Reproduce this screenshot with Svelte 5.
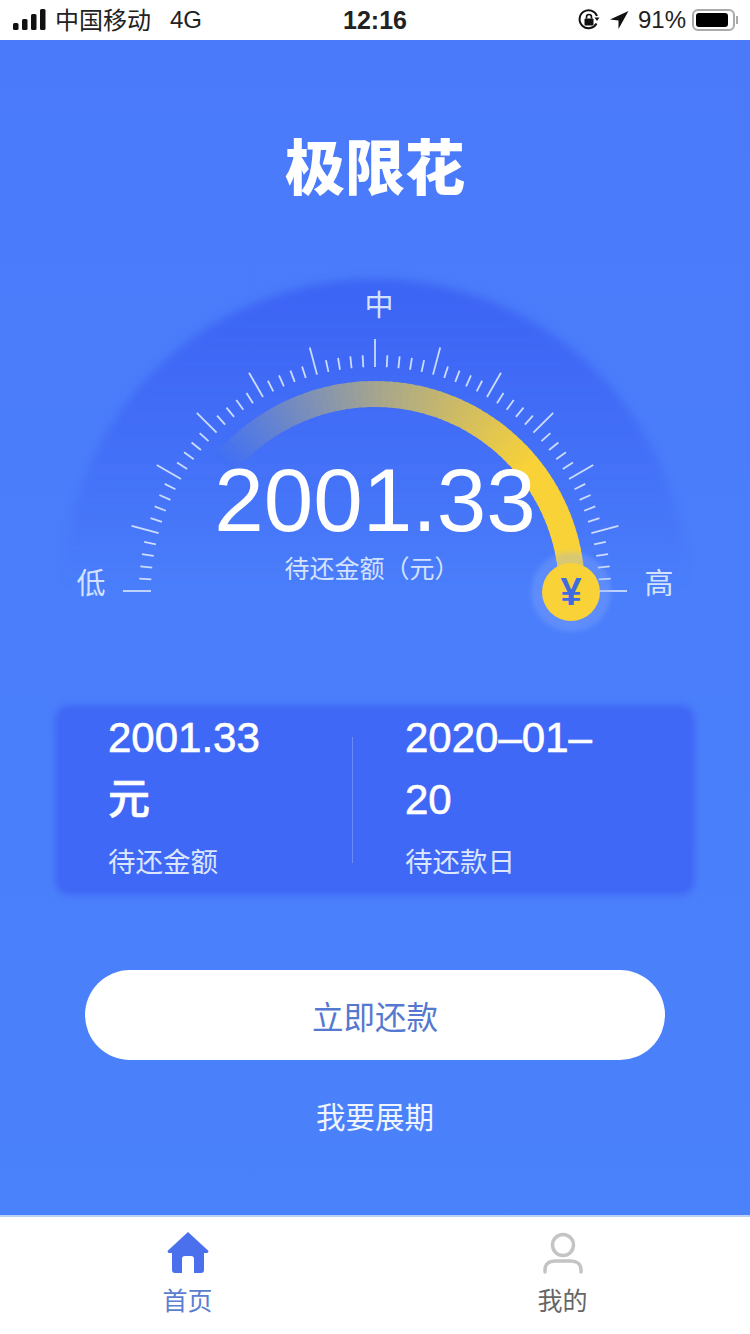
<script>
	const cx = 375;
	const cy = 331;
	const bg = [65, 112, 245];
	const yellow = [249, 210, 56];

	const ticks = [];
	for (let i = 0; i <= 60; i++) {
		const a = ((180 - i * 3) * Math.PI) / 180;
		const long = i % 5 === 0;
		const r1 = 224;
		const r2 = long ? 252 : 236;
		ticks.push({
			x1: cx + r1 * Math.cos(a),
			y1: cy - r1 * Math.sin(a),
			x2: cx + r2 * Math.cos(a),
			y2: cy - r2 * Math.sin(a)
		});
	}

	// arc fades from the background colour into yellow, so draw it in short pieces
	function strength(deg) {
		if (deg >= 90) return ((140 - deg) / 50) * 0.55;
		if (deg >= 40) return 0.55 + ((90 - deg) / 50) * 0.45;
		return 1;
	}
	const pieces = [];
	for (let d = 140; d > 0; d -= 2) {
		const a1 = (d * Math.PI) / 180;
		const a2 = ((d - 2.6) * Math.PI) / 180;
		const s = strength(d);
		const c = bg.map((v, i) => Math.round(v + (yellow[i] - v) * s));
		pieces.push({
			d: `M${cx + 197 * Math.cos(a1)} ${cy - 197 * Math.sin(a1)}A197 197 0 0 1 ${cx + 197 * Math.cos(a2)} ${cy - 197 * Math.sin(a2)}`,
			color: `rgb(${c.join(',')})`
		});
	}
</script>

<div class="page">
	<header class="status">
		<div class="status-left">
			<svg width="34" height="24" viewBox="0 0 34 24">
				<rect x="0" y="14" width="5.5" height="7" rx="1.5" />
				<rect x="9" y="10" width="5.5" height="11" rx="1.5" />
				<rect x="18" y="5" width="5.5" height="16" rx="1.5" />
				<rect x="27" y="0" width="5.5" height="21" rx="1.5" />
			</svg>
			<span class="carrier">中国移动</span>
			<span class="net">4G</span>
		</div>
		<div class="clock">12:16</div>
		<div class="status-right">
			<svg width="24" height="24" viewBox="0 0 24 24">
				<path d="M19.5 15.5A9 9 0 1 1 20 8" fill="none" stroke="#111" stroke-width="2" />
				<path d="M17.5 9.5h5l-2.5 3.4z" fill="#111" />
				<rect x="7.5" y="10.5" width="9" height="7" rx="1" fill="#111" />
				<path d="M9.5 10.5V9a2.500 2.500 0 0 1 5 0v1.500" fill="none" stroke="#111" stroke-width="1.600" />
			</svg>
			<svg class="arrow" width="20" height="20" viewBox="0 0 20 20">
				<path d="M19.500 1 1 9.500l8.500 1V19z" fill="#111" />
			</svg>
			<span class="pct">91%</span>
			<div class="battery"><div class="battery-fill"></div></div>
			<div class="battery-cap"></div>
		</div>
	</header>

	<main class="main">
		<h1 class="title">极限花</h1>

		<svg class="gauge" width="750" height="400" viewBox="0 0 750 400">
			<defs>
				<linearGradient id="halo" x1="0" y1="18" x2="0" y2="330" gradientUnits="userSpaceOnUse">
					<stop offset="0" stop-color="#3b62f4" stop-opacity="0.95" />
					<stop offset="0.5" stop-color="#3b62f4" stop-opacity="0.55" />
					<stop offset="1" stop-color="#3b62f4" stop-opacity="0" />
				</linearGradient>
				<filter id="soft" x="-10%" y="-10%" width="120%" height="120%">
					<feGaussianBlur stdDeviation="5" />
				</filter>
				<filter id="glow" x="-30%" y="-30%" width="160%" height="160%">
					<feGaussianBlur stdDeviation="2.5" />
				</filter>
			</defs>

			<circle cx={cx} cy={cy} r="312" fill="url(#halo)" filter="url(#soft)" />

			{#each pieces as p}
				<path d={p.d} fill="none" stroke={p.color} stroke-width="26" />
			{/each}

			{#each ticks as t}
				<line x1={t.x1} y1={t.y1} x2={t.x2} y2={t.y2} class="tick" />
			{/each}

			<text class="mark" x="91" y="334">低</text>
			<text class="mark" x="379" y="56">中</text>
			<text class="mark" x="659" y="334">高</text>

			<circle cx="571" cy="332" r="40" fill="#8fb0fb" opacity="0.3" filter="url(#glow)" />
			<circle cx="571" cy="332" r="29" fill="#f9d238" />
			<text class="yen" x="571" y="345">¥</text>

			<text class="amount" x="375" y="271">2001.33</text>
			<text class="amount-label" x="372" y="318">待还金额（元）</text>
		</svg>

		<section class="card">
			<div class="cell">
				<div class="value">2001.33 元</div>
				<div class="label">待还金额</div>
			</div>
			<div class="cell second">
				<div class="value">2020–01–20</div>
				<div class="label">待还款日</div>
			</div>
		</section>

		<button class="repay" type="button">立即还款</button>
		<div class="extend">我要展期</div>
	</main>

	<nav class="tabs">
		<div class="tab active">
			<svg width="42" height="42" viewBox="0 0 42 42">
				<path d="M21 0 41 18.500a1.500 1.500 0 0 1-1 2.500h-3v17a3 3 0 0 1-3 3h-7V27a3 3 0 0 0-3-3h-6a3 3 0 0 0-3 3v14H8a3 3 0 0 1-3-3V21H2a1.500 1.500 0 0 1-1-2.500z" fill="#4a70ee" />
			</svg>
			<span>首页</span>
		</div>
		<div class="tab">
			<svg width="42" height="42" viewBox="0 0 42 42">
				<circle cx="21" cy="13" r="10.500" fill="none" stroke="#c4c4c4" stroke-width="3.500" />
				<path d="M3 40v-2c0-6 4-9 10-9h16c6 0 10 3 10 9v2" fill="none" stroke="#c4c4c4" stroke-width="3.500" stroke-linecap="round" />
			</svg>
			<span>我的</span>
		</div>
	</nav>
</div>

<style>
	:global(body) {
		margin: 0;
	}
	.page {
		width: 750px;
		height: 1334px;
		display: flex;
		flex-direction: column;
		font-family: "Liberation Sans", "Noto Sans CJK SC", sans-serif;
		overflow: hidden;
	}

	.status {
		height: 40px;
		flex: none;
		background: #fff;
		color: #111;
		display: grid;
		grid-template-columns: 1fr auto 1fr;
		align-items: center;
		font-size: 24px;
	}
	.status-left {
		display: flex;
		align-items: center;
		padding-left: 13px;
	}
	.status-left svg {
		fill: #111;
		margin-top: 1px;
	}
	.carrier {
		margin-left: 8px;
		margin-top: -3px;
		color: #222;
	}
	.net {
		margin-left: 19px;
		font-size: 24px;
		color: #222;
	}
	.clock {
		font-size: 25px;
		font-weight: 700;
		color: #222;
	}
	.status-right {
		display: flex;
		align-items: center;
		justify-content: flex-end;
		padding-right: 12px;
	}
	.arrow {
		margin-left: 8px;
	}
	.pct {
		font-size: 24px;
		margin-left: 9px;
		margin-right: 6px;
		color: #222;
	}
	.battery {
		width: 43px;
		height: 22px;
		box-sizing: border-box;
		border: 2px solid #aaa;
		border-radius: 6px;
		padding: 2px;
	}
	.battery-fill {
		width: 92%;
		height: 100%;
		background: #000;
		border-radius: 3px;
	}
	.battery-cap {
		width: 2px;
		height: 8px;
		background: #aaa;
		margin-left: 1px;
	}

	.main {
		flex: 1;
		display: flex;
		flex-direction: column;
		align-items: center;
		background: linear-gradient(#4a7afa, #4a82fb);
	}
	.title {
		margin: 100px 0 0;
		font-size: 60px;
		line-height: 60px;
		font-weight: 900;
		color: #fff;
	}
	.gauge {
		display: block;
		margin-top: 60px;
		flex: none;
	}
	.tick {
		stroke: #cbdcfd;
		stroke-width: 1.8;
	}
	.mark {
		fill: #d4e2ff;
		font-size: 29px;
		text-anchor: middle;
	}
	.yen {
		fill: #3f6be0;
		font-size: 38px;
		font-weight: 700;
		text-anchor: middle;
	}
	.amount {
		fill: #fff;
		font-size: 89px;
		text-anchor: middle;
	}
	.amount-label {
		fill: #d4e2ff;
		font-size: 25px;
		text-anchor: middle;
	}

	.card {
		width: 632px;
		height: 182px;
		margin-top: 49px;
		flex: none;
		box-sizing: border-box;
		display: flex;
		background: #4068f6;
		border-radius: 10px;
		box-shadow: 0 0 7px 4px #4068f6;
		color: #fff;
	}
	.cell {
		width: 293px;
		box-sizing: border-box;
		padding: 0 0 0 49px;
		position: relative;
	}
	.second {
		width: 339px;
		padding-left: 53px;
		padding-right: 80px;
	}
	.second::before {
		content: "";
		position: absolute;
		left: 0;
		top: 28px;
		height: 126px;
		width: 1px;
		background: #6a8cf8;
	}
	.value {
		font-size: 42px;
		line-height: 62px;
		font-weight: 500;
		-webkit-text-stroke: 0.6px #fff;
		width: 200px;
		margin-top: -2px;
	}
	.label {
		font-size: 27.5px;
		line-height: 40px;
		margin-top: 12px;
		color: #dbe6ff;
	}

	.repay {
		width: 580px;
		height: 90px;
		margin-top: 79px;
		flex: none;
		border: none;
		border-radius: 45px;
		background: #fff;
		color: #5578d0;
		font: inherit;
		font-size: 31.5px;
	}
	.extend {
		margin-top: 38px;
		font-size: 29.5px;
		line-height: 40px;
		color: #f0f4ff;
	}

	.tabs {
		height: 119px;
		flex: none;
		box-sizing: border-box;
		border-top: 2px solid #bcd0f5;
		background: #fff;
		display: flex;
	}
	.tab {
		flex: 1;
		display: flex;
		flex-direction: column;
		align-items: center;
		padding-top: 15px;
		font-size: 25px;
		color: #666;
	}
	.tab span {
		margin-top: 9px;
		line-height: 36px;
	}
	.tab.active {
		color: #5a7fd0;
	}
</style>
